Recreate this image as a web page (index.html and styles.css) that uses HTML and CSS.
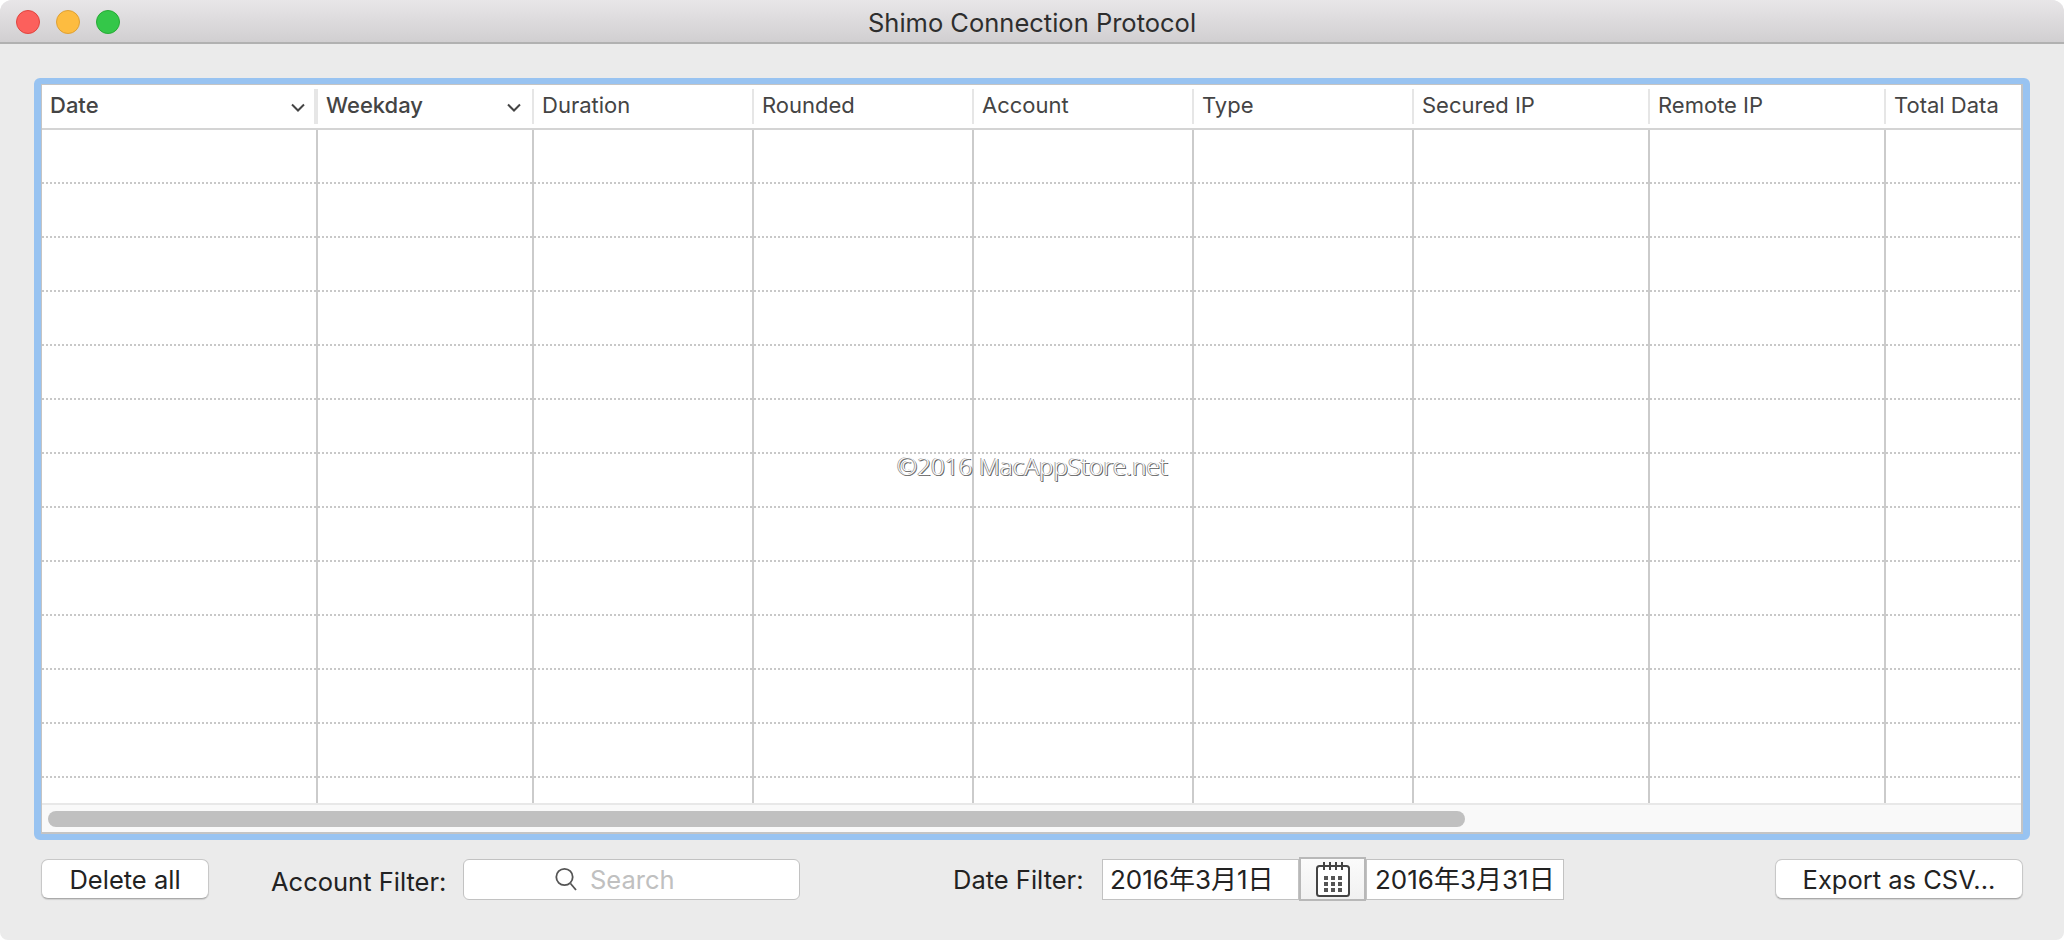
FILE: index.html
```html
<!DOCTYPE html>
<html lang="en">
<head>
  <meta charset="UTF-8">
  <title>Shimo Connection Protocol</title>
  <link rel="stylesheet" href="styles.css">
</head>
<body>
  <div class="window">
    <header class="titlebar">
      <div class="lights">
        <span class="light red"></span>
        <span class="light yellow"></span>
        <span class="light green"></span>
      </div>
      <h1>Shimo Connection Protocol</h1>
    </header>

    <main class="content">
      <div class="table-frame">
        <table class="log">
          <colgroup>
            <col class="c1"><col class="c2"><col class="c3"><col class="c4"><col class="c5"><col class="c6"><col class="c7"><col class="c8"><col class="c9">
          </colgroup>
          <thead>
            <tr>
              <th class="sorted thick"><span>Date</span>
                <svg class="chevron" viewBox="0 0 14 9"><path d="M1 1.5l6 6 6-6"/></svg></th>
              <th class="sorted"><span>Weekday</span>
                <svg class="chevron" viewBox="0 0 14 9"><path d="M1 1.5l6 6 6-6"/></svg></th>
              <th>Duration</th>
              <th>Rounded</th>
              <th>Account</th>
              <th>Type</th>
              <th>Secured IP</th>
              <th>Remote IP</th>
              <th>Total Data</th>
            </tr>
          </thead>
          <tbody>
            <tr><td></td><td></td><td></td><td></td><td></td><td></td><td></td><td></td><td></td></tr>
            <tr><td></td><td></td><td></td><td></td><td></td><td></td><td></td><td></td><td></td></tr>
            <tr><td></td><td></td><td></td><td></td><td></td><td></td><td></td><td></td><td></td></tr>
            <tr><td></td><td></td><td></td><td></td><td></td><td></td><td></td><td></td><td></td></tr>
            <tr><td></td><td></td><td></td><td></td><td></td><td></td><td></td><td></td><td></td></tr>
            <tr><td></td><td></td><td></td><td></td><td></td><td></td><td></td><td></td><td></td></tr>
            <tr><td></td><td></td><td></td><td></td><td></td><td></td><td></td><td></td><td></td></tr>
            <tr><td></td><td></td><td></td><td></td><td></td><td></td><td></td><td></td><td></td></tr>
            <tr><td></td><td></td><td></td><td></td><td></td><td></td><td></td><td></td><td></td></tr>
            <tr><td></td><td></td><td></td><td></td><td></td><td></td><td></td><td></td><td></td></tr>
            <tr><td></td><td></td><td></td><td></td><td></td><td></td><td></td><td></td><td></td></tr>
            <tr><td></td><td></td><td></td><td></td><td></td><td></td><td></td><td></td><td></td></tr>
            <tr class="last"><td></td><td></td><td></td><td></td><td></td><td></td><td></td><td></td><td></td></tr>
          </tbody>
        </table>
        <div class="scrollbar"><div class="thumb"></div></div>
      </div>

      <div class="footer">
        <button class="btn delete">Delete all</button>
        <label class="label account-label">Account Filter:</label>
        <div class="search">
          <svg class="search-icon" viewBox="0 0 24 24"><circle cx="10.5" cy="10" r="8.2"/><path d="M16.5 16.5l5.5 6.5"/></svg>
          <span>Search</span>
        </div>
        <label class="label date-label">Date Filter:</label>
        <div class="dates">
          <div class="date-field">2016年3月1日</div>
          <div class="calendar">
            <svg viewBox="0 0 34 36">
              <rect class="cal-body" x="1" y="5" width="32" height="30" rx="2.5"/>
              <path class="cal-top" d="M8 1v8M14 1v8M20 1v8M26 1v8"/>
              <path class="cal-dots" d="M8 15h4v4H8zM15 15h4v4h-4zM22 15h4v4h-4zM8 21h4v4H8zM15 21h4v4h-4zM22 21h4v4h-4zM8 27h4v4H8zM15 27h4v4h-4zM22 27h4v4h-4z"/>
            </svg>
          </div>
          <div class="date-field last-date">2016年3月31日</div>
        </div>
        <button class="btn export">Export as CSV...</button>
      </div>
    </main>

    <div class="watermark">©2016 MacAppStore.net</div>
  </div>
</body>
</html>
```

FILE: styles.css
```css
html, body {
  margin: 0;
  padding: 0;
  background: #fff;
}
body {
  font-family: Inter, "Noto Sans CJK JP", sans-serif;
  overflow: hidden;
}
.window {
  position: relative;
  width: 2064px;
  height: 940px;
  background: #ebebeb;
  border-radius: 12px 12px 8px 8px;
  overflow: hidden;
}

/* title bar */
.titlebar {
  height: 44px;
  box-sizing: border-box;
  padding-top: 3px;
  display: flex;
  align-items: center;
  justify-content: center;
  background: linear-gradient(#e8e6e8, #d1cfd1);
  border-bottom: 2px solid #b1b1b1;
}
.titlebar h1 {
  margin: 0;
  font-size: 25.5px;
  font-weight: 400;
  color: #2e2e2e;
}
.lights {
  position: absolute;
  left: 16px;
  top: 10px;
  display: flex;
  gap: 16px;
}
.light {
  width: 24px;
  height: 24px;
  box-sizing: border-box;
  border-radius: 50%;
  border: 1px solid;
}
.red { background: #fc605c; border-color: #e0443e; }
.yellow { background: #fdbc40; border-color: #dea034; }
.green { background: #34c749; border-color: #27aa35; }

/* table */
.content {
  padding: 34px 34px 0;
}
.table-frame {
  width: 1996px;
  height: 762px;
  box-sizing: border-box;
  border: 6px solid #98c3f1;
  border-left-width: 7px;
  border-right-width: 7px;
  border-radius: 6px;
  background: #fff;
  display: flex;
  flex-direction: column;
  overflow: hidden;
  box-shadow: inset 0 0 0 2px #c4c4c4;
}
.log {
  table-layout: fixed;
  width: 1979px;
  margin: 1px 2px 0 1px;
  border-collapse: separate;
  border-spacing: 0;
  flex: none;
}
.c1 { width: 276px; }
.c2 { width: 216px; }
.c3 { width: 220px; }
.c4 { width: 220px; }
.c5 { width: 220px; }
.c6 { width: 220px; }
.c7 { width: 236px; }
.c8 { width: 236px; }
.c9 { width: 135px; }
.log th {
  position: relative;
  box-sizing: border-box;
  height: 45px;
  padding: 0 0 3px 8px;
  text-align: left;
  font-size: 22px;
  font-weight: 400;
  color: #444;
  background: #fff;
  border-bottom: 2px solid #d4d4d4;
}
.log th::after {
  content: "";
  position: absolute;
  right: 0;
  top: 4px;
  bottom: 4px;
  width: 2px;
  background: #e6e6e6;
}
.log th.thick::after {
  width: 4px;
}
.log th:last-child::after {
  display: none;
}
.log th.sorted {
  font-weight: 500;
}
.chevron {
  position: absolute;
  right: 13px;
  top: 18px;
  width: 14px;
  height: 9px;
  fill: none;
  stroke: #444;
  stroke-width: 2;
}
.log td {
  height: 54px;
  padding: 0;
  background: #fff repeating-linear-gradient(90deg, #c8c8c8 0 2px, transparent 2px 4px) left bottom / 100% 2px no-repeat;
  border-right: 2px solid #cbcbcb;
}
.log td:last-child {
  border-right: 0;
}
.log tr.last td {
  height: 25px;
  background: #fff;
}
.scrollbar {
  flex: 1;
  margin: 0 2px 2px 1px;
  padding-top: 6px;
  background: #f9f9f9;
  border-top: 2px solid #e8e8e8;
}
.thumb {
  width: 1417px;
  height: 16px;
  margin-left: 6px;
  border-radius: 8px;
  background: #c0c0c0;
}

/* footer controls */
.footer {
  display: flex;
  align-items: center;
  height: 42px;
  margin-top: 18px;
  padding-left: 7px;
  font-size: 25.5px;
  color: #222;
}
.btn {
  height: 40px;
  padding: 0;
  font-family: inherit;
  font-size: 25.5px;
  color: #222;
  background: #fff;
  border: 1px solid #c8c8c8;
  border-bottom-color: #aaa;
  border-radius: 7px;
  box-shadow: 0 1px 1px rgba(0, 0, 0, 0.12);
}
.delete { width: 168px; }
.export { width: 248px; margin-left: 211px; }
.label { white-space: nowrap; }
.account-label { margin-left: 62px; margin-top: 4px; width: 192px; }
.date-label { margin-left: 153px; width: 149px; }
.search {
  width: 337px;
  height: 41px;
  box-sizing: border-box;
  display: flex;
  align-items: center;
  padding-left: 90px;
  gap: 12px;
  background: #fff;
  border: 1px solid #c2c2c2;
  border-radius: 6px;
  color: #c0c0c0;
}
.search-icon {
  width: 24px;
  height: 24px;
  fill: none;
  stroke: #555;
  stroke-width: 1.8;
}
.dates {
  display: flex;
  align-items: center;
}
.date-field {
  width: 197px;
  height: 41px;
  box-sizing: border-box;
  padding-left: 7px;
  line-height: 39px;
  font-size: 26px;
  background: #fff;
  border: 1px solid #c2c2c2;
  white-space: nowrap;
}
.last-date { width: 198px; padding-left: 8px; }
.calendar {
  width: 67px;
  height: 44px;
  box-sizing: border-box;
  display: flex;
  align-items: center;
  justify-content: center;
  background: linear-gradient(#fbfbfb, #f1f1f1);
  border: 2px solid #b8b8b8;
}
.calendar svg {
  width: 34px;
  height: 36px;
}
.cal-body {
  fill: #fff;
  stroke: #444;
  stroke-width: 2;
}
.cal-top {
  fill: none;
  stroke: #444;
  stroke-width: 2;
}
.cal-dots {
  fill: #555;
}

/* watermark laid over the table */
.watermark {
  position: absolute;
  left: 897px;
  top: 449px;
  font-family: "Open Sans", sans-serif;
  font-size: 24.3px;
  font-weight: 300;
  color: #fff;
  text-shadow: -1px 0 0 #999, 0 1px 0 #777, 1px 1px 0 #555;
  white-space: nowrap;
}
```
